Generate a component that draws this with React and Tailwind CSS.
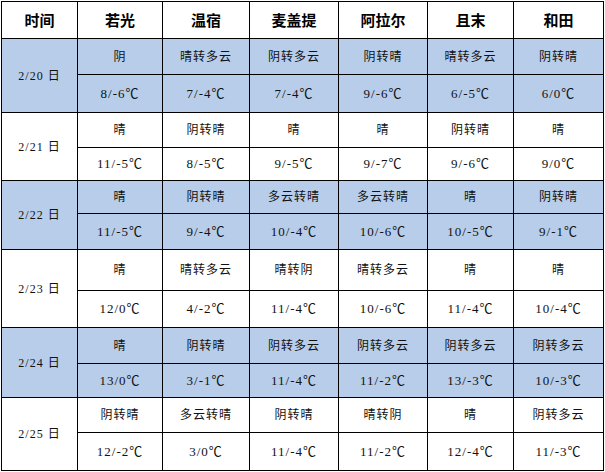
import React from "react";

const cities = ["若光", "温宿", "麦盖提", "阿拉尔", "且末", "和田"];

const days = [
  {
    date: "2/20 日",
    blue: true,
    weather: ["阴", "晴转多云", "阴转多云", "阴转晴", "晴转多云", "阴转晴"],
    temp: ["8/-6℃", "7/-4℃", "7/-4℃", "9/-6℃", "6/-5℃", "6/0℃"],
  },
  {
    date: "2/21 日",
    blue: false,
    weather: ["晴", "阴转晴", "晴", "晴", "阴转晴", "晴"],
    temp: ["11/-5℃", "8/-5℃", "9/-5℃", "9/-7℃", "9/-6℃", "9/0℃"],
  },
  {
    date: "2/22 日",
    blue: true,
    weather: ["晴", "阴转晴", "多云转晴", "多云转晴", "晴", "阴转晴"],
    temp: ["11/-5℃", "9/-4℃", "10/-4℃", "10/-6℃", "10/-5℃", "9/-1℃"],
  },
  {
    date: "2/23 日",
    blue: false,
    weather: ["晴", "晴转多云", "晴转阴", "晴转多云", "晴", "晴"],
    temp: ["12/0℃", "4/-2℃", "11/-4℃", "10/-6℃", "11/-4℃", "10/-4℃"],
  },
  {
    date: "2/24 日",
    blue: true,
    weather: ["晴", "阴转晴", "阴转多云", "阴转多云", "阴转多云", "阴转多云"],
    temp: ["13/0℃", "3/-1℃", "11/-4℃", "11/-2℃", "13/-3℃", "10/-3℃"],
  },
  {
    date: "2/25 日",
    blue: false,
    weather: ["阴转晴", "多云转晴", "阴转晴", "晴转阴", "晴", "阴转多云"],
    temp: ["12/-2℃", "3/0℃", "11/-4℃", "11/-2℃", "12/-4℃", "11/-3℃"],
  },
];

const font = {
  fontFamily: '"Liberation Serif", "Noto Sans CJK SC", serif',
};

export default function App() {
  return (
    <div className="w-[605px] h-[472px] bg-white pt-px pl-px">
      <div
        className="grid w-[603px] bg-black gap-px p-px grid-cols-[75px_84px_86px_88px_88px_85px_89px] grid-rows-[36px_35px_37px_34px_32px_32px_35px_40px_36px_35px_33px_34px_37px]"
        style={font}
      >
        <div className="bg-white flex items-center justify-center text-[15px] font-bold text-black font-['Noto_Sans_CJK_SC']">
          时间
        </div>
        {cities.map((c) => (
          <div
            key={c}
            className="bg-white flex items-center justify-center text-[15px] font-bold text-black font-['Noto_Sans_CJK_SC']"
          >
            {c}
          </div>
        ))}

        {days.map((d) => {
          const bg = d.blue ? "bg-[#b7cde9]" : "bg-white";
          return (
            <React.Fragment key={d.date}>
              <div
                className={`${bg} row-span-2 flex items-center justify-center text-[12px] tracking-[1px] text-[#111]`}
              >
                {d.date}
              </div>
              {d.weather.map((w, i) => (
                <div
                  key={"w" + i}
                  className={`${bg} flex items-center justify-center text-[12px] tracking-[1px] text-[#111]`}
                >
                  {w}
                </div>
              ))}
              {d.temp.map((t, i) => (
                <div
                  key={"t" + i}
                  className={`${bg} flex items-center justify-center text-[13px] tracking-[1px] text-[#111]`}
                >
                  {t}
                </div>
              ))}
            </React.Fragment>
          );
        })}
      </div>
    </div>
  );
}
